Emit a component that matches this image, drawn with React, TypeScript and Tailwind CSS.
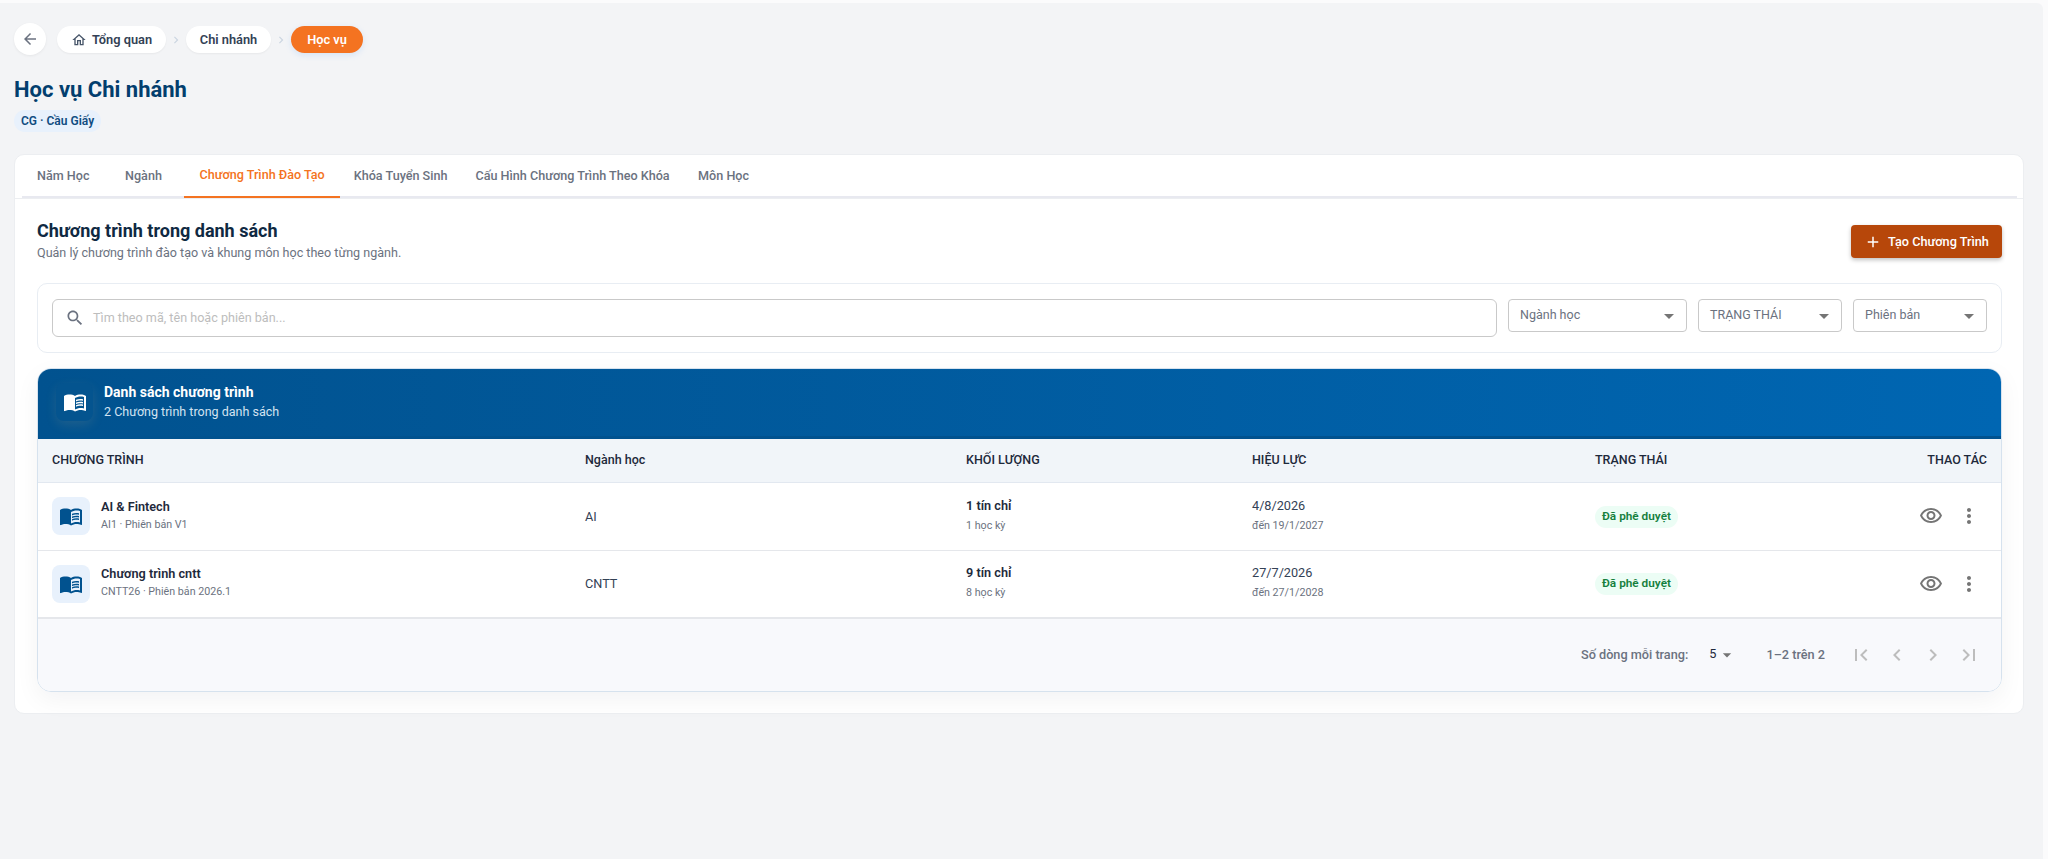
import React from "react";

const icons = {
  back: "M20 11H7.83l5.59-5.59L12 4l-8 8 8 8 1.41-1.41L7.83 13H20v-2z",
  home: "M12 5.69l5 4.5V18h-2v-6H9v6H7v-7.81l5-4.5M12 3L2 12h3v8h6v-6h2v6h6v-8h3L12 3z",
  next: "M10 6L8.59 7.41 13.17 12l-4.58 4.59L10 18l6-6z",
  add: "M19 13h-6v6h-2v-6H5v-2h6V5h2v6h6v2z",
  search:
    "M15.5 14h-.79l-.28-.27C15.41 12.59 16 11.11 16 9.5 16 5.91 13.09 3 9.5 3S3 5.91 3 9.5 5.91 16 9.5 16c1.61 0 3.09-.59 4.23-1.57l.27.28v.79l5 4.99L20.49 19l-4.99-5zm-6 0C7.01 14 5 11.99 5 9.5S7.01 5 9.5 5 14 7.01 14 9.5 11.99 14 9.5 14z",
  drop: "M7 10l5 5 5-5z",
  book:
    "M21 5c-1.11-.35-2.33-.5-3.5-.5-1.95 0-4.05.4-5.5 1.5-1.45-1.1-3.55-1.5-5.5-1.5S2.45 4.9 1 6v14.65c0 .25.25.5.5.5.1 0 .15-.05.25-.05C3.1 20.45 5.05 20 6.5 20c1.95 0 4.05.4 5.5 1.5 1.35-.85 3.8-1.5 5.5-1.5 1.65 0 3.35.3 4.75 1.05.1.05.15.05.25.05.25 0 .5-.25.5-.5V6c-.6-.45-1.25-.75-2-1zm0 13.5c-1.1-.35-2.3-.5-3.5-.5-1.7 0-4.15.65-5.5 1.5V8c1.35-.85 3.8-1.5 5.5-1.5 1.2 0 2.4.15 3.5.5v11.5zM17.5 10.5c.88 0 1.73.09 2.5.26V9.24c-.79-.15-1.64-.24-2.5-.24-1.7 0-3.24.29-4.5.83v1.66c1.13-.64 2.7-.99 4.5-.99zM13 12.49v1.66c1.13-.64 2.7-.99 4.5-.99.88 0 1.73.09 2.5.26V11.9c-.79-.15-1.64-.24-2.5-.24-1.7 0-3.24.3-4.5.83zM17.5 14.33c-1.7 0-3.24.29-4.5.83v1.66c1.13-.64 2.7-.99 4.5-.99.88 0 1.73.09 2.5.26v-1.52c-.79-.16-1.64-.24-2.5-.24z",
  eye:
    "M12 6c3.79 0 7.17 2.13 8.82 5.5C19.17 14.87 15.79 17 12 17s-7.17-2.13-8.82-5.5C4.83 8.13 8.21 6 12 6m0-2C7 4 2.73 7.11 1 11.5 2.73 15.89 7 19 12 19s9.27-3.11 11-7.5C21.27 7.11 17 4 12 4zm0 5c1.38 0 2.5 1.12 2.5 2.5S13.38 14 12 14s-2.5-1.12-2.5-2.5S10.62 9 12 9m0-2c-2.48 0-4.5 2.02-4.5 4.5S9.52 16 12 16s4.5-2.02 4.5-4.5S14.48 7 12 7z",
  more: "M12 8c1.1 0 2-.9 2-2s-.9-2-2-2-2 .9-2 2 .9 2 2 2zm0 2c-1.1 0-2 .9-2 2s.9 2 2 2 2-.9 2-2-.9-2-2-2zm0 6c-1.1 0-2 .9-2 2s.9 2 2 2 2-.9 2-2-.9-2-2-2z",
  first: "M18.41 16.59L13.82 12l4.59-4.59L17 6l-6 6 6 6zM6 6h2v12H6z",
  prev: "M15.41 16.59L10.83 12l4.58-4.59L14 6l-6 6 6 6 1.41-1.41z",
  right: "M8.59 16.59L13.17 12 8.59 7.41 10 6l6 6-6 6-1.41-1.41z",
  last: "M5.59 7.41L10.18 12l-4.59 4.59L7 18l6-6-6-6zM16 6h2v12h-2z",
};

function Icon({ name, className }: { name: keyof typeof icons; className: string }) {
  return (
    <svg viewBox="0 0 24 24" fill="currentColor" className={className}>
      <path d={icons[name]} />
    </svg>
  );
}

const tabs = ["Năm Học", "Ngành", "Chương Trình Đào Tạo", "Khóa Tuyển Sinh", "Cấu Hình Chương Trình Theo Khóa", "Môn Học"];

const rows = [
  { name: "AI & Fintech", code: "AI1 · Phiên bản V1", major: "AI", credits: "1 tín chỉ", terms: "1 học kỳ", from: "4/8/2026", to: "đến 19/1/2027" },
  { name: "Chương trình cntt", code: "CNTT26 · Phiên bản 2026.1", major: "CNTT", credits: "9 tín chỉ", terms: "8 học kỳ", from: "27/7/2026", to: "đến 27/1/2028" },
];

const gridCols = "grid grid-cols-[533px_381px_286px_343px_1fr] items-center px-[14px]";

function Select({ label, width }: { label: string; width: string }) {
  return (
    <div className={`${width} h-[33px] flex items-center justify-between pl-[11px] pr-[5px] rounded border border-[#c9c9c9] text-[12.5px] text-[#6b7280] bg-white`}>
      <span>{label}</span>
      <Icon name="drop" className="w-6 h-6 text-[#757575]" />
    </div>
  );
}

export default function App() {
  return (
    <div className="w-full min-h-[859px] bg-[#fbfbfc] pt-[3px] pr-[5px] flex font-['Roboto',sans-serif]">
      <div className="flex-1 bg-[#f3f4f6] rounded-tr-[6px] pl-[14px] pr-[19px] pt-[20px]">
        <nav className="flex items-start h-[32px]">
          <button className="w-[32px] h-[32px] rounded-full bg-white flex items-center justify-center shadow-[0_1px_3px_rgba(0,0,0,0.06)] text-[#6b7280]">
            <Icon name="back" className="w-[18px] h-[18px]" />
          </button>
          <div className="flex items-center ml-[11px] mt-[3px] text-[12.8px] font-semibold">
            <span className="h-[27px] w-[109px] rounded-full bg-white flex items-center justify-center gap-[5px] text-[#334155] shadow-[0_1px_2px_rgba(0,0,0,0.05)]">
              <Icon name="home" className="w-[16px] h-[16px] text-[#475569]" />
              Tổng quan
            </span>
            <Icon name="next" className="w-[14px] h-[14px] mx-[3px] text-[#cbd5e1]" />
            <span className="h-[27px] w-[85px] rounded-full bg-white flex items-center justify-center text-[#334155] shadow-[0_1px_2px_rgba(0,0,0,0.05)]">
              Chi nhánh
            </span>
            <Icon name="next" className="w-[14px] h-[14px] mx-[3px] text-[#cbd5e1]" />
            <span className="h-[27px] w-[72px] rounded-full bg-[#f47321] flex items-center justify-center text-white shadow-[0_2px_6px_rgba(96,165,250,0.2)]">
              Học vụ
            </span>
          </div>
        </nav>

        <h1 className="mt-[19px] text-[22px] leading-[32px] font-bold text-[#023e6e]">Học vụ Chi nhánh</h1>
        <span className="flex w-fit items-center mt-[4px] h-[22px] px-[7px] rounded-full bg-[#e8f1fc] text-[12px] font-semibold text-[#0f4c81]">
          CG · Cầu Giấy
        </span>

        <div className="mt-[22px] h-[560px] bg-white rounded-[10px] border border-[#eceef1]">
          <div className="border-b border-[#eceef1]">
            <div className="ml-[7px] mr-[6px] pl-[1px] flex h-[43px] border-b-2 border-[#e8e9f0]">
              {tabs.map((t) => (
                <div
                  key={t}
                  className={
                    t === "Chương Trình Đào Tạo"
                      ? "h-[43px] ml-[1px] min-w-[80px] px-[15px] flex items-center justify-center text-[12.6px] font-medium text-[#f47321] border-b-2 border-[#f47321]"
                      : "h-[43px] min-w-[80px] px-[14px] flex items-center justify-center text-[12.6px] font-medium text-[#6b7280]"
                  }
                >
                  {t}
                </div>
              ))}
            </div>
          </div>

          <div className="pl-[22px] pr-[21px]">
            <div className="flex items-start justify-between pt-[20px]">
              <div>
                <h2 className="text-[18px] leading-[24px] font-bold text-[#0f2942]">Chương trình trong danh sách</h2>
                <p className="mt-[1px] text-[12.55px] leading-[18px] text-[#6b7280]">Quản lý chương trình đào tạo và khung môn học theo từng ngành.</p>
              </div>
              <button className="mt-[6px] w-[151px] h-[33px] rounded bg-[#b7470a] flex items-center justify-center gap-[6px] text-[12.7px] font-medium text-white shadow-[0_2px_4px_rgba(0,0,0,0.25)]">
                <Icon name="add" className="w-[18px] h-[18px]" />
                Tạo Chương Trình
              </button>
            </div>

            <div className="mt-[21px] h-[70px] rounded-[10px] border border-[#e8edf3] flex items-start gap-[11px] pl-[14px] pt-[15px]">
              <div className="w-[1445px] h-[38px] rounded-md border border-[#c9c9c9] flex items-center pl-[12px] gap-[8px] text-[12.6px] text-[#bdbdbd]">
                <Icon name="search" className="w-[20px] h-[20px] text-[#6b7280]" />
                Tìm theo mã, tên hoặc phiên bản...
              </div>
              <Select label="Ngành học" width="w-[179px]" />
              <Select label="TRẠNG THÁI" width="w-[144px]" />
              <Select label="Phiên bản" width="w-[134px]" />
            </div>

            <div className="mt-[15px] rounded-[14px] border border-[#d6e2ee] overflow-hidden shadow-[0_8px_24px_rgba(15,23,42,0.05)]">
              <div className="h-[70px] bg-gradient-to-r from-[#01528f] to-[#0066b2] border-b-[3px] border-[#01528f] flex items-center pl-[18px] pb-[2px] gap-[11px]">
                <div className="w-[37px] h-[38px] rounded-lg bg-[#04548f] flex items-center justify-center text-white shadow-[0_4px_12px_rgba(255,200,120,0.12)]">
                  <Icon name="book" className="w-[24px] h-[24px]" />
                </div>
                <div>
                  <div className="text-[14px] leading-[20px] font-bold text-white">Danh sách chương trình</div>
                  <div className="text-[12.5px] leading-[20px] text-[#d3e3f1]">2 Chương trình trong danh sách</div>
                </div>
              </div>

              <div className={`${gridCols} h-[44px] bg-[#f1f5f9] border-b border-[#e2e8f0] text-[12.5px] font-medium text-[#1e293b]`}>
                <div>CHƯƠNG TRÌNH</div>
                <div>Ngành học</div>
                <div>KHỐI LƯỢNG</div>
                <div>HIỆU LỰC</div>
                <div className="flex justify-between">
                  <span>TRẠNG THÁI</span>
                  <span>THAO TÁC</span>
                </div>
              </div>

              {rows.map((r) => (
                <div key={r.code} className={`${gridCols} h-[67.5px] bg-white border-b border-[#e5e7eb]`}>
                  <div className="flex items-center gap-[11px]">
                    <div className="w-[38px] h-[38px] rounded-lg bg-[#e8f1fc] flex items-center justify-center text-[#01528f]">
                      <Icon name="book" className="w-[24px] h-[24px]" />
                    </div>
                    <div className="pb-[2px]">
                      <div className="text-[12.7px] leading-[18px] font-semibold text-[#1e293b]">{r.name}</div>
                      <div className="text-[10.7px] leading-[17px] text-[#6b7280]">{r.code}</div>
                    </div>
                  </div>
                  <div className="text-[12.7px] text-[#334155]">{r.major}</div>
                  <div className="pb-[2px]">
                    <div className="text-[12.7px] leading-[18px] font-semibold text-[#1e293b]">{r.credits}</div>
                    <div className="mt-[3px] text-[10.7px] leading-[16px] text-[#6b7280]">{r.terms}</div>
                  </div>
                  <div className="pb-[2px]">
                    <div className="text-[12.7px] leading-[18px] text-[#334155]">{r.from}</div>
                    <div className="mt-[3px] text-[10.7px] leading-[16px] text-[#6b7280]">{r.to}</div>
                  </div>
                  <div className="flex items-center justify-between">
                    <span className="mt-[1px] h-[22px] px-[7px] rounded-full bg-[#ecfdf5] flex items-center text-[11.8px] font-semibold text-[#15803d]">
                      Đã phê duyệt
                    </span>
                    <div className="flex items-center gap-[14px] pr-[6px]">
                      <Icon name="eye" className="w-[24px] h-[24px] text-[#757575]" />
                      <Icon name="more" className="w-[24px] h-[24px] text-[#757575]" />
                    </div>
                  </div>
                </div>
              ))}

              <div className="h-[73px] bg-[#f8f9fc] border-t border-[#e5e7eb] flex items-center justify-end pr-[20px] text-[12.7px] text-[#6b7280]">
                <span className="font-medium">Số dòng mỗi trang:</span>
                <span className="ml-[21px] mb-[3px] text-[#1e293b]">5</span>
                <Icon name="drop" className="w-[20px] h-[20px] ml-[1px] text-[#757575]" />
                <span className="ml-[29px] font-medium">1–2 trên 2</span>
                <div className="ml-[24px] flex items-center gap-[12px] text-[#bdbdbd]">
                  <Icon name="first" className="w-[24px] h-[24px]" />
                  <Icon name="prev" className="w-[24px] h-[24px]" />
                  <Icon name="right" className="w-[24px] h-[24px]" />
                  <Icon name="last" className="w-[24px] h-[24px]" />
                </div>
              </div>
            </div>
          </div>
        </div>
      </div>
    </div>
  );
}
